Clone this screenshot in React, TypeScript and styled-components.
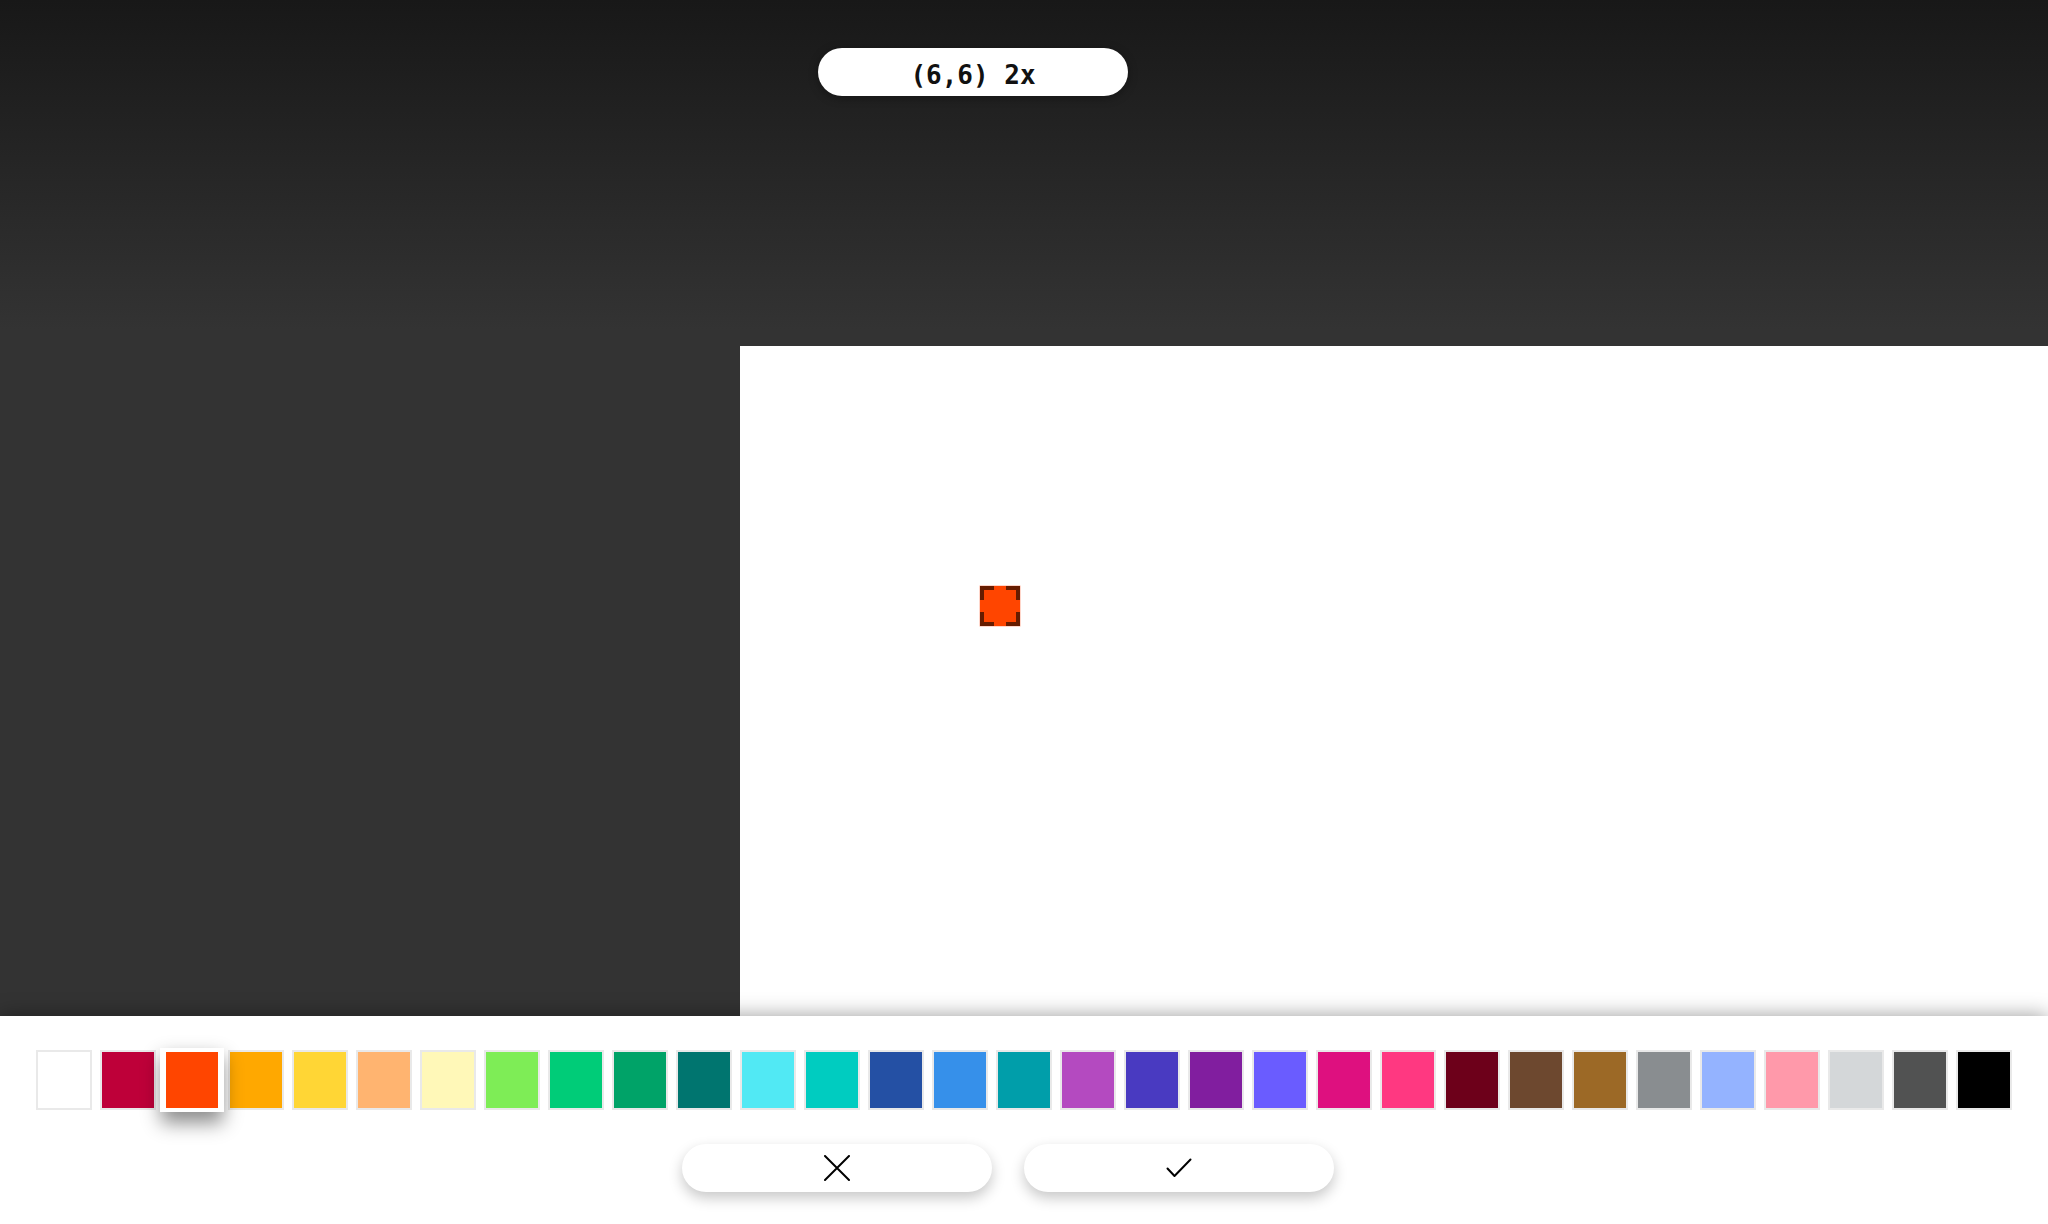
import styled, { createGlobalStyle } from 'styled-components';

const palette = [
  '#ffffff', '#be0039', '#ff4500', '#ffa800', '#ffd635', '#ffb470', '#fff8b8',
  '#7eed56', '#00cc78', '#00a368', '#00756f', '#51e9f4', '#00ccc0', '#2450a4',
  '#3690ea', '#009eaa', '#b44ac0', '#493ac1', '#811e9f', '#6a5cff', '#de107f',
  '#ff3881', '#6d001a', '#6d482f', '#9c6926', '#898d90', '#94b3ff', '#ff99aa',
  '#d4d7d9', '#515252', '#000000',
];

const selectedColor = '#ff4500';

const GlobalStyle = createGlobalStyle`
  html, body {
    margin: 0;
    padding: 0;
    overflow: hidden;
  }
  body {
    font-family: "Noto Sans", "Liberation Sans", sans-serif;
  }
`;

export default function App() {
  return (
    <>
      <GlobalStyle />
      <Screen>
        <Viewport>
          <Canvas>
            <Pixel $color={selectedColor}>
              <Corner $v="top" $h="left" />
              <Corner $v="top" $h="right" />
              <Corner $v="bottom" $h="left" />
              <Corner $v="bottom" $h="right" />
            </Pixel>
          </Canvas>
          <CoordPill>(6,6) 2x</CoordPill>
        </Viewport>

        <Panel>
          <Palette>
            {palette.map((color) => (
              <Swatch
                key={color}
                $color={color}
                $selected={color === selectedColor}
                aria-label={color}
              />
            ))}
          </Palette>

          <Actions>
            <ActionButton aria-label="cancel">
              <svg width="26" height="26" viewBox="0 0 26 26" fill="none">
                <path
                  d="M1 1 25 25M25 1 1 25"
                  stroke="#000"
                  strokeWidth="2"
                  strokeLinecap="round"
                />
              </svg>
            </ActionButton>
            <ActionButton aria-label="confirm">
              <svg width="26" height="20" viewBox="0 0 26 20" fill="none">
                <path
                  d="M1.5 10.5 8.5 18 24.5 1.5"
                  stroke="#000"
                  strokeWidth="2"
                  strokeLinecap="round"
                  strokeLinejoin="round"
                />
              </svg>
            </ActionButton>
          </Actions>
        </Panel>
      </Screen>
    </>
  );
}

const Screen = styled.div`
  width: 100vw;
  height: 100vh;
  display: flex;
  flex-direction: column;
`;

const Viewport = styled.div`
  position: relative;
  flex: 1;
  overflow: hidden;
  background: linear-gradient(to bottom, #181818 0px, #333333 330px, #333333 100%);
`;

const Canvas = styled.div`
  position: absolute;
  left: 740px;
  top: 346px;
  width: 2000px;
  height: 2000px;
  background: #ffffff;
`;

const Pixel = styled.div<{ $color: string }>`
  position: absolute;
  left: 240px;
  top: 240px;
  width: 40px;
  height: 40px;
  background: ${({ $color }) => $color};
  box-shadow: 0 0 0 0.5px rgba(255, 120, 80, 0.6);
`;

const Corner = styled.span<{ $v: 'top' | 'bottom'; $h: 'left' | 'right' }>`
  position: absolute;
  ${({ $v }) => $v}: 0;
  ${({ $h }) => $h}: 0;
  width: 14px;
  height: 14px;
  box-sizing: border-box;
  border-${({ $v }) => $v}: 4px solid #661c00;
  border-${({ $h }) => $h}: 4px solid #661c00;
`;

const CoordPill = styled.div`
  position: absolute;
  top: 48px;
  left: 818px;
  width: 310px;
  height: 48px;
  border-radius: 24px;
  background: #ffffff;
  box-shadow: 0 2px 10px rgba(0, 0, 0, 0.35);
  display: flex;
  align-items: center;
  justify-content: center;
  font-family: "DejaVu Sans Mono", "Liberation Mono", monospace;
  font-weight: 700;
  font-size: 26px;
  color: #111111;
  padding-top: 6px;
  box-sizing: border-box;
`;

const Panel = styled.div`
  position: relative;
  z-index: 2;
  height: 208px;
  flex-shrink: 0;
  box-sizing: border-box;
  padding: 34px 36px 0;
  background: #ffffff;
  box-shadow: 0 0 20px rgba(0, 0, 0, 0.4);
  display: flex;
  flex-direction: column;
  gap: 34px;
`;

const Palette = styled.div`
  display: flex;
  gap: 8px;
`;

const Swatch = styled.button<{ $color: string; $selected: boolean }>`
  position: relative;
  z-index: ${({ $selected }) => ($selected ? 1 : 0)};
  width: 56px;
  height: 60px;
  padding: 0;
  margin: 0;
  box-sizing: border-box;
  flex-shrink: 0;
  cursor: pointer;
  outline: none;
  background: ${({ $color }) => $color};
  border: 2px solid ${({ $selected }) => ($selected ? '#ffffff' : '#e9e9e9')};
  box-shadow: ${({ $selected }) =>
    $selected
      ? '-2px 0 0 2px #fff, 2px 0 0 2px #fff, 0 10px 18px 3px rgba(0, 0, 0, 0.45)'
      : 'none'};
`;

const Actions = styled.div`
  display: flex;
  gap: 32px;
  padding-left: 646px;
`;

const ActionButton = styled.button`
  width: 310px;
  height: 48px;
  border: none;
  border-radius: 24px;
  background: #ffffff;
  box-shadow: 0 6px 14px rgba(0, 0, 0, 0.22);
  display: flex;
  align-items: center;
  justify-content: center;
  padding: 0;
  cursor: pointer;
  outline: none;
`;
